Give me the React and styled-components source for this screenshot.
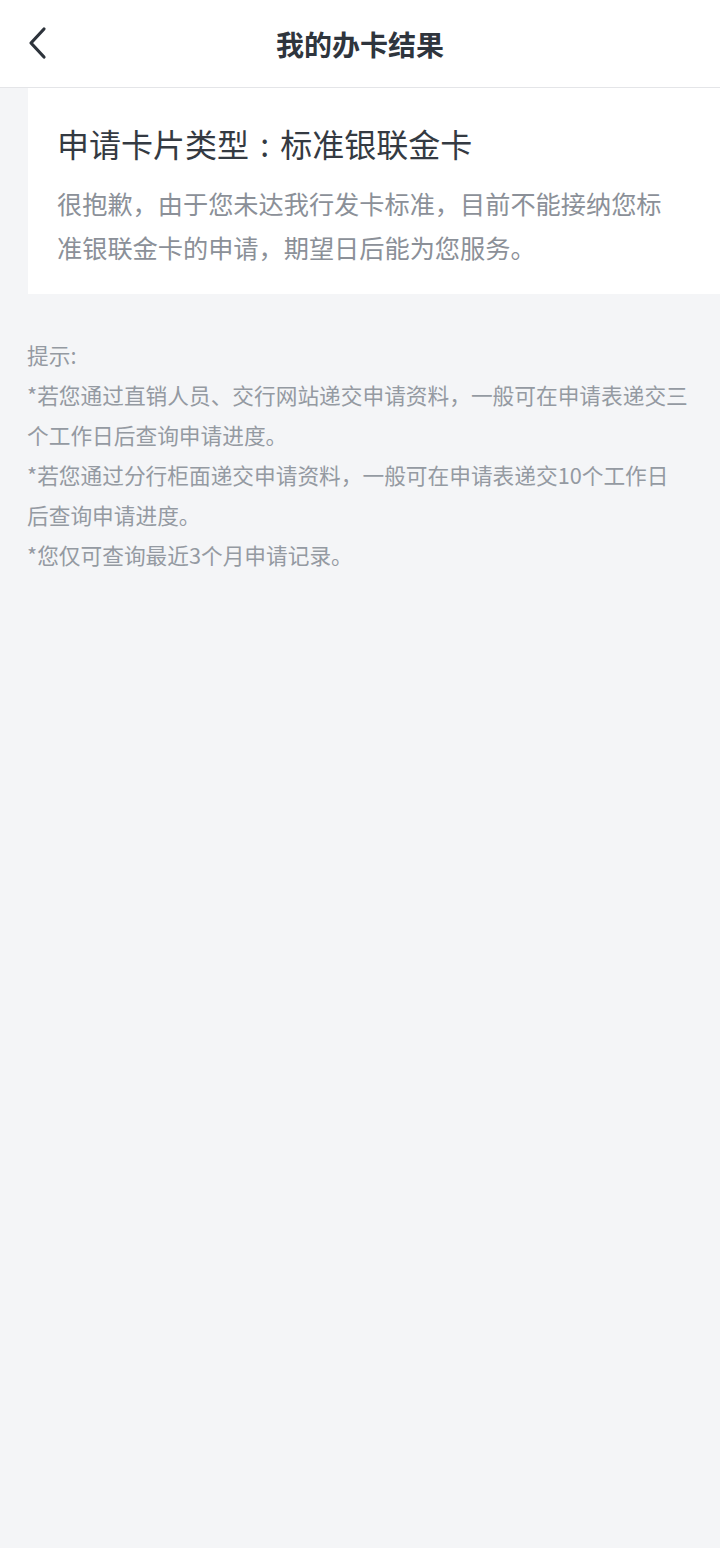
import styled, { createGlobalStyle } from "styled-components";

const GlobalStyle = createGlobalStyle`
  html, body {
    margin: 0;
    padding: 0;
    background: #f4f5f7;
    font-family: "Noto Sans CJK SC", "Noto Sans", sans-serif;
  }
`;

const tips = [
  ["提示:"],
  ["*若您通过直销人员、交行网站递交申请资料，一般可在申请表递交三", "个工作日后查询申请进度。"],
  ["*若您通过分行柜面递交申请资料，一般可在申请表递交10个工作日", "后查询申请进度。"],
  ["*您仅可查询最近3个月申请记录。"],
];

function BackIcon() {
  return (
    <svg width="22" height="34" viewBox="0 0 22 34" fill="none">
      <path
        d="M17 3 L4 17 L17 31"
        stroke="#2d333b"
        strokeWidth="3.2"
        strokeLinecap="round"
        strokeLinejoin="round"
      />
    </svg>
  );
}

export default function App() {
  return (
    <Page>
      <GlobalStyle />
      <Header>
        <BackButton type="button">
          <BackIcon />
        </BackButton>
        <Title>我的办卡结果</Title>
      </Header>

      <Card>
        <CardTitle>申请卡片类型 : 标准银联金卡</CardTitle>
        <CardText>
          很抱歉，由于您未达我行发卡标准，目前不能接纳您标准银联金卡的申请，期望日后能为您服务。
        </CardText>
      </Card>

      <Tips>
        {tips.map((lines, i) => (
          <TipLine key={i}>
            {lines.map((line, j) => (
              <span key={j}>
                {line}
                {j < lines.length - 1 && <br />}
              </span>
            ))}
          </TipLine>
        ))}
      </Tips>
    </Page>
  );
}

const Page = styled.div`
  min-height: 1548px;
  background: #f4f5f7;
`;

const Header = styled.header`
  position: relative;
  height: 87px;
  background: #fff;
  border-bottom: 1px solid #e4e5e8;
  display: flex;
  align-items: center;
  justify-content: center;
`;

const BackButton = styled.button`
  position: absolute;
  left: 27px;
  top: 26px;
  padding: 0;
  border: none;
  background: none;
  display: flex;
  cursor: pointer;
`;

const Title = styled.h1`
  margin: 0;
  font-size: 28px;
  font-weight: 600;
  color: #2f353d;
  line-height: 1;
`;

const Card = styled.section`
  margin-left: 28px;
  background: #fff;
  padding: 33px 46px 25px 29px;
  display: flex;
  flex-direction: column;
  gap: 16px;
`;

const CardTitle = styled.h2`
  margin: 0;
  font-size: 32px;
  font-weight: 400;
  line-height: 44px;
  word-spacing: 4px;
  color: #343a42;
`;

const CardText = styled.p`
  margin: 0;
  font-size: 25.2px;
  line-height: 44px;
  color: #8b9098;
`;

const Tips = styled.div`
  padding: 41px 20px 0 27px;
`;

const TipLine = styled.p`
  margin: 0;
  font-size: 21.7px;
  line-height: 40px;
  color: #949aa2;
  white-space: nowrap;
`;
